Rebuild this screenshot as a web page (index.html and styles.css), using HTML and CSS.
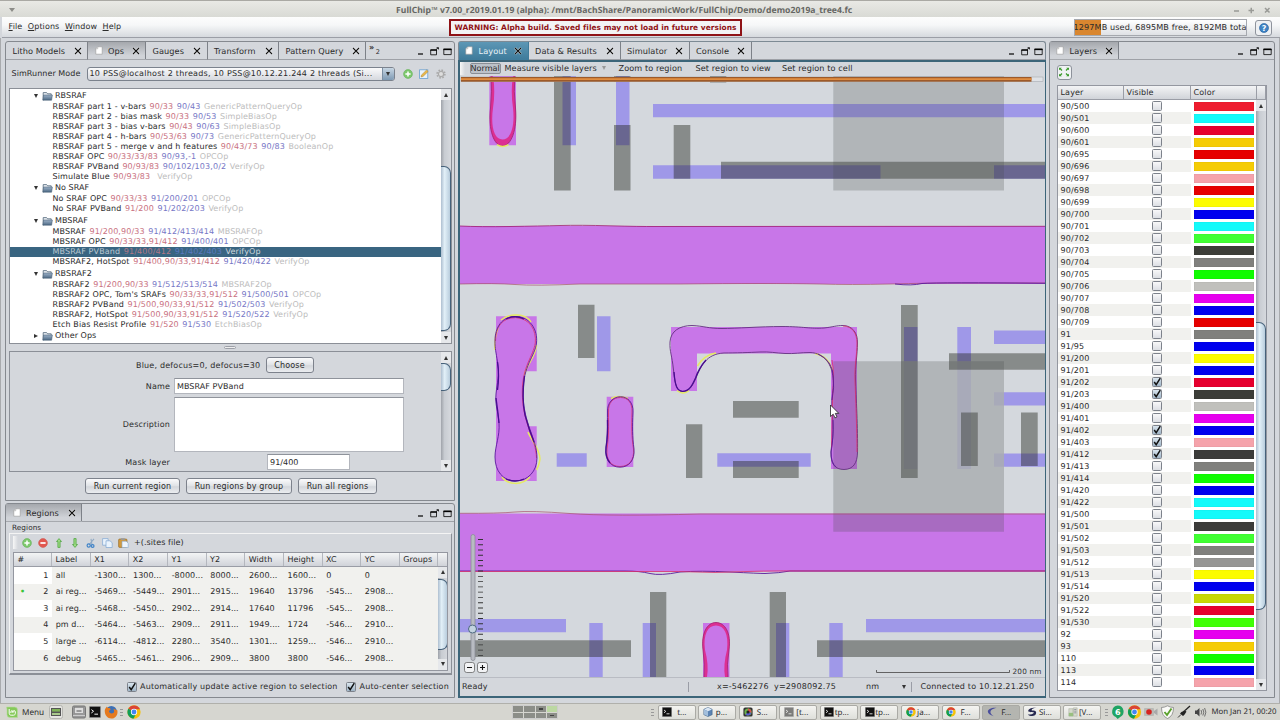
FILE: index.html
```
<!DOCTYPE html>
<html lang="en">
<head>
    <meta charset="UTF-8">
    <title>FullChip</title>
    <link rel="stylesheet" href="styles.css">
</head>
<body>
    <svg class="defs" width="0" height="0">
        <linearGradient id="g-folder" x1="0" y1="0" x2="0" y2="1"><stop offset="0" stop-color="#9db2c8"/><stop offset="1" stop-color="#4c6884"/></linearGradient>
        <symbol id="i-x" viewBox="0 0 8 8"><path d="M1 1l6 6M7 1L1 7" stroke="#fff" stroke-width="2.4" opacity=".7"/><path d="M1 1l6 6M7 1L1 7" stroke="#111" stroke-width="1.1"/></symbol>
        <symbol id="i-doc" viewBox="0 0 8 9"><path d="M2.8.8h4.4v7.4H.8V2.8z" fill="#fff" stroke="#999" stroke-width=".6"/><path d="M.8 2.8h2v-2" fill="#ddd" stroke="#999" stroke-width=".4"/></symbol>
        <symbol id="i-min" viewBox="0 0 9 9"><path d="M2 7h5" stroke="#000" stroke-width="1.2"/></symbol>
        <symbol id="i-float" viewBox="0 0 9 9"><path d="M.7 3h5.8v4.8H.7z" fill="none" stroke="#000" stroke-width=".8"/><path d="M.4 3h6.4" stroke="#000" stroke-width="1.3"/><path d="M6 2.6L8.2.8M6.6.7h1.9v1.7" fill="none" stroke="#000" stroke-width=".8"/></symbol>
        <symbol id="i-max" viewBox="0 0 9 9"><path d="M.8 2.2h7.4v5.4H.8z" fill="none" stroke="#000" stroke-width=".8"/><path d="M.4 2.4h8.2" stroke="#000" stroke-width="1.5"/></symbol>
        <symbol id="i-folder" viewBox="0 0 11 10"><path d="M1.2 9V1.6h3.4l1 1.2h3.6V5z" fill="#e8edf2" stroke="#4f6478" stroke-width=".8"/><path d="M.8 9.2L1.6 4h8.8L9.6 9.2z" fill="url(#g-folder)" stroke="#3f566d" stroke-width=".5"/></symbol>
        <symbol id="i-plus" viewBox="0 0 10 10"><circle cx="5" cy="5" r="4.4" fill="#7cc86b" stroke="#6fb562" stroke-width=".7"/><path d="M5 2.4v5.2M2.4 5h5.2" stroke="#fff" stroke-width="1.5"/></symbol>
        <symbol id="i-minus" viewBox="0 0 10 10"><circle cx="5" cy="5" r="4.4" fill="#e2574f" stroke="#d0605a" stroke-width=".7"/><path d="M2.4 5h5.2" stroke="#fff" stroke-width="1.7"/></symbol>
        <symbol id="i-edit" viewBox="0 0 10 10"><rect x=".6" y=".8" width="8.2" height="8.6" fill="#e8f2fb" stroke="#6a9fd0" stroke-width=".8"/><path d="M2 7.9l.5-2L7.6 1l1.6 1.5-5.2 5z" fill="#eab84a" stroke="#9b7428" stroke-width=".4"/></symbol>
        <symbol id="i-gear" viewBox="0 0 10 10"><circle cx="5" cy="5" r="3.9" fill="none" stroke="#aaa" stroke-width="1.6" stroke-dasharray="1.6 1.46"/><circle cx="5" cy="5" r="2.6" fill="#ddd" stroke="#aaa" stroke-width="1.2"/></symbol>
        <symbol id="i-arrow" viewBox="0 0 10 10"><path d="M5 .6l2.5 2.9H6.1v5.9H3.9V3.5H2.5z" fill="#9fdb86" stroke="#43a035" stroke-width=".7"/></symbol>
        <symbol id="i-cut" viewBox="0 0 10 10"><path d="M3.3 6.5L8 .8M6 6.8L5 .8" stroke="#8fa9c4" stroke-width="1.1"/><circle cx="2.7" cy="7.5" r="1.6" fill="none" stroke="#3f83c8" stroke-width="1.2"/><circle cx="6.6" cy="8" r="1.4" fill="none" stroke="#3f83c8" stroke-width="1.2"/></symbol>
        <symbol id="i-copy" viewBox="0 0 11 10"><path d="M.6.6h5.5v6.6H.6z" fill="#eaf3fc" stroke="#7fa6d2" stroke-width=".7"/><path d="M4 2.8h4l2.2 2v4.7H4z" fill="#eaf3fc" stroke="#7fa6d2" stroke-width=".7"/></symbol>
        <symbol id="i-paste" viewBox="0 0 11 10"><rect x=".6" y="1" width="8.4" height="8.4" rx="1" fill="#d29a3e" stroke="#8f6420" stroke-width=".6"/><rect x="2.8" y=".3" width="4" height="1.7" fill="#999"/><path d="M4 3.2h4.2l2 2v4.4H4z" fill="#eef5fc" stroke="#7fa6d2" stroke-width=".6"/></symbol>
        <symbol id="i-check" viewBox="0 0 10 10"><path d="M2.2 5l2 2.6L8.3 1.2" fill="none" stroke="#111" stroke-width="1.5"/></symbol>
        <symbol id="i-term" viewBox="0 0 10 10"><rect width="10" height="10" rx=".6" fill="#999"/><rect x=".7" y=".7" width="8.6" height="8.6" fill="#111"/><path d="M2 3l1.8 1.4L2 5.8M4.5 6.8h3" stroke="#fff" fill="none" stroke-width=".8"/></symbol>
        <symbol id="i-chrome" viewBox="0 0 12 12"><circle cx="6" cy="6" r="5.7" fill="#f4c20d"/><path d="M6 6L1.1 3.2A5.7 5.7 0 0 1 11.2 3.6L6 3.6z" fill="#db4437"/><path d="M6 6L1.1 3.2A5.7 5.7 0 0 0 5.5 11.7L8 7.2z" fill="#0f9d58"/><circle cx="6" cy="6" r="2.7" fill="#fff"/><circle cx="6" cy="6" r="2.1" fill="#4285f4"/></symbol>
    </svg>

    <div class="titlebar">
        <span class="title-menu"></span>
        <span class="title-text">FullChip™ v7.00_r2019.01.19 (alpha): /mnt/BachShare/PanoramicWork/FullChip/Demo/demo2019a_tree4.fc</span>
        <svg class="title-buttons" width="40" height="8" viewBox="0 0 40 8"><path d="M1 5h5M15.5 4.5H21M18.25 1.8v5.4M32 2l4.5 4.5M36.5 2L32 6.5" stroke="#999a96" stroke-width="1.5"/></svg>
    </div>

    <div class="menubar">
        <div class="menus"><span><u>F</u>ile</span><span><u>O</u>ptions</span><span><u>W</u>indow</span><span><u>H</u>elp</span></div>
        <div class="warning">WARNING: Alpha build. Saved files may not load in future versions</div>
        <div class="memory">1297MB used, 6895MB free, 8192MB tota</div>
        <div class="help"><svg width="10" height="10" viewBox="0 0 10 10"><circle cx="5" cy="5" r="4.5" fill="#3f83c4" stroke="#1f5c9c" stroke-width=".6"/><text x="5" y="7.8" class="help-mark">?</text></svg></div>
    </div>

    <div class="workspace">
        <div class="column left">
            <section class="dock ops">
                <div class="tabs">
                    <div class="tab w-litho">Litho Models<svg class="x"><use href="#i-x"/></svg></div>
                    <div class="tab active w-ops"><svg class="doc"><use href="#i-doc"/></svg>Ops<svg class="x"><use href="#i-x"/></svg></div>
                    <div class="tab w-gauges">Gauges<svg class="x"><use href="#i-x"/></svg></div>
                    <div class="tab w-transform">Transform<svg class="x"><use href="#i-x"/></svg></div>
                    <div class="tab w-pattern">Pattern Query<svg class="x"><use href="#i-x"/></svg></div>
                    <div class="more"><b>»</b><span>2</span></div>
                    <div class="dock-buttons"><svg><use href="#i-min"/></svg><svg><use href="#i-float"/></svg><svg><use href="#i-max"/></svg></div>
                </div>
                <div class="runner">
                    <span class="runner-label">SimRunner Mode</span>
                    <div class="combo"><span>10 PSS@localhost 2 threads, 10 PSS@10.12.21.244 2 threads (Si...</span><i><b class="down"></b></i></div>
                    <svg class="icon"><use href="#i-plus"/></svg><svg class="icon"><use href="#i-edit"/></svg><svg class="icon"><use href="#i-gear"/></svg>
                </div>
                <div class="tree-box">
                    <div class="tree" id="tree"></div>
                    <div class="scroll"><i class="btn"><b class="up"></b></i><div class="track"><div class="thumb tree-thumb"></div></div><i class="btn"><b class="down"></b></i></div>
                </div>
                <div class="splitter"><i></i></div>
                <div class="form-box">
                    <div class="form">
                        <div class="choose"><span>Blue, defocus=0, defocus=30</span><button>Choose</button></div>
                        <div class="field"><label>Name</label><div class="input">MBSRAF PVBand</div></div>
                        <div class="field tall"><label>Description</label><div class="input"></div></div>
                        <div class="field mask"><label>Mask layer</label><div class="input">91/400</div></div>
                    </div>
                    <div class="scroll"><i class="btn"><b class="up"></b></i><div class="track"><div class="thumb form-thumb"></div></div><i class="btn"><b class="down"></b></i></div>
                </div>
                <div class="run-buttons"><button class="run1">Run current region</button><button class="run2">Run regions by group</button><button class="run3">Run all regions</button></div>
            </section>

            <section class="dock regions">
                <div class="tabs">
                    <div class="tab active w-regions"><svg class="doc"><use href="#i-doc"/></svg>Regions<svg class="x"><use href="#i-x"/></svg></div>
                    <div class="dock-buttons"><svg><use href="#i-min"/></svg><svg><use href="#i-float"/></svg><svg><use href="#i-max"/></svg></div>
                </div>
                <div class="regions-label">Regions</div>
                <div class="regions-box">
                    <div class="regions-tools">
                        <i class="handle"></i>
                        <svg><use href="#i-plus"/></svg><svg><use href="#i-minus"/></svg><svg><use href="#i-arrow"/></svg><svg class="flip"><use href="#i-arrow"/></svg><svg><use href="#i-cut"/></svg><svg class="wide"><use href="#i-copy"/></svg><svg class="wide"><use href="#i-paste"/></svg>
                        <span>+(.sites file)</span>
                    </div>
                    <div class="grid">
                        <div class="grid-head" id="regions-head"></div>
                        <div class="grid-main">
                            <div class="grid-rows" id="regions-rows"></div>
                            <div class="scroll"><i class="btn"><b class="up"></b></i><div class="track"><div class="thumb regions-thumb"></div></div><i class="btn"><b class="down"></b></i></div>
                        </div>
                    </div>
                </div>
                <div class="checks"><i class="box on"><svg><use href="#i-check"/></svg></i><span class="c1">Automatically update active region to selection</span><i class="box on"><svg><use href="#i-check"/></svg></i><span class="c2">Auto-center selection</span></div>
            </section>
        </div>

        <section class="dock layout">
            <div class="tabs">
                <div class="tab focus w-layout"><svg class="doc"><use href="#i-doc"/></svg>Layout<svg class="x"><use href="#i-x"/></svg></div>
                <div class="tab w-data">Data &amp; Results<svg class="x"><use href="#i-x"/></svg></div>
                <div class="tab w-sim">Simulator<svg class="x"><use href="#i-x"/></svg></div>
                <div class="tab w-console">Console<svg class="x"><use href="#i-x"/></svg></div>
                <div class="dock-buttons"><svg><use href="#i-min"/></svg><svg><use href="#i-float"/></svg><svg><use href="#i-max"/></svg></div>
            </div>
            <div class="layout-body">
                <div class="layout-tools">
                    <i class="handle"></i><span class="t0">Normal</span><span class="t1">Measure visible layers</span><b class="down dim"></b>
                    <span class="t2">Zoom to region</span><span class="t3">Set region to view</span><span class="t4">Set region to cell</span>
                </div>
                <svg class="canvas" width="585" height="601" viewBox="460 76 585 601">
                    <g class="pink">
                        <path d="M489.3 76h26.7v69.3h-26.7z"/>
                        <path d="M460 226h585v58H460zM460 513.5h585v58H460z"/>
                        <path d="M496 316.3h40.7v55H523v55h13.7V481H496z"/>
                        <path d="M606.7 396.7h26.6V467h-26.6z"/>
                        <path d="M671 327h186v142h-26V353.5H697V391h-26z"/>
                        <path d="M703 623h26.5v54H703z"/>
                        <path d="M515.5 316.5C530 316.5 538 330 536.5 343C535 356 523 366 523 392C523 424 537 438 537 458C537 471 528 481 515.5 481S495 471 495 457C495 446 500 436 499 423C498 410 495 406 496 394C497 382 500 376 497.5 362C496 352 495 349 495 341C495 327 502 316.5 515.5 316.5z"/>
                    </g>
                    <g class="blue">
                        <path d="M562.5 76H576v69.3h-13.5zM616 76h13.5v69.3H616zM653 104h392v13.3H653zM653 165.3h227.5v13.4H653zM994 165.3h51v13.4h-51z"/>
                        <path d="M597 316.3h13.5v55H597zM556.7 453.3h30v13.4h-30zM717.3 453.3h93.4v13.4h-93.4z"/>
                        <path d="M904 327h13.5v34.3H904zM957.3 327H971v34.3h-13.7zM994 330.5h51V344h-51zM1004 392.2h41v13.3h-41zM1004 453.5h41v13.3h-41z"/>
                        <path d="M460 619h106v13.2H460zM589.3 623h13.4v54h-13.4zM642.7 623H656v54h-13.3zM776 623h13.3v54H776zM829.3 623h13.4v54h-13.4zM866 619h179v13.2H866z"/>
                    </g>
                    <path class="blue faint" d="M904 361.3h13.5V469H904zM957.3 361.3H971V469h-13.7zM994 392.2h10v13.3h-10zM994 453.5h10v13.3h-10z"/>
                    <g class="gray">
                        <path d="M554 76h16.7v114.5H554zM614 76h16.5v6H614zM614 125h16.5v65.5H614zM673.7 125h16.6v53.7h-16.6zM710 76h16.3v6.5H710zM721 161.7h324v17H721z"/>
                        <path d="M578 304.7h16.5V358H578zM733 401h65.7v16.7H733zM686 424.3h16.3V478H686zM733 461h65.7v17H733z"/>
                        <path d="M901 305h16.7v173H901zM949 353.3h96v16.5h-96zM961 412.5h16.8V466H961zM1021 412.5h16.7V466H1021z"/>
                        <path d="M650 592h16.3v85H650zM769.7 592H786v85h-16.3zM460 640.3h171V657H460zM817 640.3h228V657H817z"/>
                    </g>
                    <path class="wash" d="M833.3 76H1004v114.5H833.3zM833.3 361.3H1004v170.5H833.3z"/>

                    <!-- process band: hot fill between outer and inner contour -->
                    <path class="band" fill-rule="evenodd" d="M491 76Q492 91 490.5 108C488 130 494 146 502.5 146S517.5 130 515.5 108Q513.5 91 514.8 76H513Q510.5 91 513 108C515 126 511 139.5 502.5 139.5S490.5 126 493 108Q495.5 91 493 76z"/>
                    <path d="M491 76Q492 91 490.5 108C488 130 494 146 502.5 146S517.5 130 515.5 108Q513.5 91 514.8 76" class="c-rim"/>
                    <path d="M497 144.7Q502.5 148.5 508.5 144.7" class="c-yellow"/>
                    <path class="band" fill-rule="evenodd" d="M704 677Q705 665 703 650C701 633 707 622.5 716 622.5S731.5 633 729 650Q726.5 665 728 677H725Q723 665 727 650C729 634 724 625.5 716 625.5S703 634 705 650Q709 665 707 677z"/>
                    <path d="M704 677Q705 665 703 650C701 633 707 622.5 716 622.5S731.5 633 729 650Q726.5 665 728 677" class="c-rim"/>

                    <!-- contours: yellow halo, red inner, dark blue outer -->
                    <path d="M501 320C510 313 525 313 531 322M536.5 345C536 356 526 366 524.5 375M528 432C531 440 540 449 540 459Q539 466 536.5 470M502 477C508 485 522 486 530 477M495 350Q494 338 498 328" class="c-yellow"/>
                    <path d="M516 317.7C530 318.5 536.5 330 535.3 343C533 357 522.3 366 522.3 392C522.3 424 536 438 536.5 458M495.5 341C495.5 327 502 317.7 515.5 317.7" class="c-red"/>
                    <path d="M515.5 316.5C530 316.5 538 330 536.5 343C535 356 523 366 523 392C523 424 537 438 537 458C537 471 528 481 515.5 481S495 471 495 457C495 446 500 436 499 423C498 410 495 406 496 394C497 382 500 376 497.5 362C496 352 495 349 495 341C495 327 502 316.5 515.5 316.5z" class="c-blue"/>
                    <path d="M497.5 362Q499.5 376 497.5 390M499 423Q498 412 496 398M524.5 376Q521.5 400 525 415Q529 430 534 442M506 319Q515 314.5 524 319M506 479Q515 483 524 479" class="c-navy"/>

                    <path d="M611 398.5Q619 394.5 628 398.5" class="c-yellow"/>
                    <path d="M620.5 397.5C628 397.5 632.5 403 632 412C631.5 427 631.5 436 633.5 449C634.5 460 629 466.5 620 466.5S606 460 607 449C609 435 608.5 427 608.5 412C608 403 613 397.5 620.5 397.5z" class="c-red"/>
                    <path d="M620.5 396.7C628 396.7 633.5 403 633 412C632.3 427 632.3 436 634 449C635 460 629 467.2 620 467.2S604.7 460 606 449C608 435 607.5 427 607.5 412C607 403 613 396.7 620.5 396.7z" class="c-blue"/>
                    <path d="M607.5 420Q608 435 606 447Q605 457 610 463" class="c-navy"/>

                    <path d="M697.5 366Q704 355 716 353M815 353.5Q828 356 832.5 370M677 390.5Q683 395.5 689 390.5" class="c-yellow"/>
                    <path d="M682.5 391.5C677 391.5 675 385 673.5 370C672 355 669.5 352 670 342C670.5 331 680 325.5 692 325.5C704 326 708 328.5 722 328.5S760 326.5 782 326.5S810 329 824 328C833 327 836 325.5 843 325.5C852 325.5 858 333 857.5 343C857.5 355 855 365 855.5 380S858 430 857.5 452C857.5 463 853 469.5 844 469.5S830.5 464 831 452C831.5 443 833.5 439 833 425S831.5 410 832 400S834 386 833 378C832 365 825 353 810 352.5C800 352.5 795 354 785 353.5S770 351.5 760 352S735 353 724 353C706 354 701 366 696 378C692 387 689 391.5 682.5 391.5z" class="c-line"/>
                    <path d="M843 326C852 326 857 333 857 343C857 355 854.5 365 855 380S857 430 857 452M832 360Q834.5 372 832.7 395L831.5 450" class="c-red"/>
                    <path d="M674 372C675 386 677 391 682.5 391.3C689 391.3 692 386 695.5 378Q699 368 706 360" class="c-navy"/>
                    <path d="M818 354Q833 361 833.3 377Q834.5 387 832 400M833 420Q833.5 440 831 452Q831 463 836 467" class="c-blue"/>

                    <path d="M460 226Q480 227 510 226.5T560 225.5T610 225.8T655 226.5L1045 226.3" class="c-rim"/>
                    <path d="M460 284Q495 283 515 284.5T580 284H680Q770 283 820 284Q850 285 890 284T945 283H1045" class="c-brown"/>
                    <path d="M895 284Q912 286 922 283.5Q940 282.3 1045 283.3" class="c-blue"/>
                    <path d="M460 513.3Q500 513.5 515 512T570 513.5T700 514L1045 514" class="c-brown"/>
                    <path d="M460 571H625Q640 571 650 573.5T680 572Q700 570.5 730 572T765 573.5Q780 573 790 571L1045 571" class="c-blue"/>
                    <path d="M460 571.5H640Q680 571 715 572.5Q770 570.5 800 571H1045" class="c-red"/>

                    <g id="zoom-slider">
                        <rect x="471" y="534.5" width="4" height="126" rx="2" fill="#b8bbc2" stroke="#8b8e98" stroke-width=".8"/>
                        <path d="M480.5 539v117.5" stroke="#333" stroke-width="5" stroke-dasharray=".9 4.37"/>
                        <circle cx="472.5" cy="629" r="4" fill="#c3d3e0" stroke="#4e6a80" stroke-width="1"/>
                        <g fill="#f2f3f5" stroke="#666" stroke-width=".8"><rect x="464.5" y="662.5" width="10" height="10" rx="2.2"/><rect x="477.5" y="662.5" width="10" height="10" rx="2.2"/></g>
                        <path d="M467 667.5h5M480 667.5h5M482.5 665v5" stroke="#111" stroke-width="1.1"/>
                    </g>
                    <path d="M876.5 670v2.5h133V670" fill="none" stroke="#555" stroke-width=".9"/>
                    <text x="1012.5" y="674.3" class="scale-text">200 nm</text>

                    <rect x="461" y="77" width="582" height="4.7" fill="#dfe2e6" stroke="#9a9ea5" stroke-width=".5"/>
                    <rect x="461" y="77" width="570.5" height="4.7" fill="#9d5a2a"/>
                    <rect x="461" y="78.2" width="570.5" height="1.8" fill="#e08d40"/>
                    <path d="M830.5 405v11.5l2.7-2.3 1.8 3.7 2-1-1.7-3.5h3.5z" fill="#fff" stroke="#222" stroke-width=".8"/>
                </svg>
                <div class="status"><span class="s1">Ready</span><span class="s2">x=-5462276&nbsp; y=2908092.75</span><span class="s3">nm</span><b class="down"></b><span class="s4">Connected to 10.12.21.250</span></div>
            </div>
        </section>

        <section class="dock layers">
            <div class="tabs">
                <div class="tab active w-layers"><svg class="doc"><use href="#i-doc"/></svg>Layers<svg class="x"><use href="#i-x"/></svg></div>
                <div class="dock-buttons"><svg><use href="#i-min"/></svg><svg><use href="#i-float"/></svg><svg><use href="#i-max"/></svg></div>
            </div>
            <div class="fit"><svg width="12" height="10" viewBox="0 0 12 10"><path d="M4 3.5L2 1.5M8 3.5l2-2M4 6.5l-2 2M8 6.5l2 2" stroke="#3a9a2a" stroke-width="1.2"/><path d="M1 3.300V.700h2.800zM11 3.300V.700H8.200zM1 6.700v2.600h2.800zM11 6.700v2.600H8.200z" fill="#3a9a2a"/></svg></div>
            <div class="layer-table">
                <div class="layer-head"><span>Layer</span><span>Visible</span><span>Color</span><span></span></div>
                <div class="layer-main">
                    <div class="layer-rows" id="layers"></div>
                    <div class="scroll"><i class="btn"><b class="up"></b></i><div class="track"><div class="thumb layers-thumb"></div></div><i class="btn"><b class="down"></b></i></div>
                </div>
            </div>
        </section>
    </div>

    <div class="taskbar">
        <svg class="mint" width="12" height="12" viewBox="0 0 12 12"><path d="M.5 1h8a3 3 0 0 1 3 3v7.5H4a3 3 0 0 1-3-3V3.5z" fill="#86c95a" stroke="#b7dba0" stroke-width=".6"/><path d="M3.2 3v4.2c0 1.3.8 2 2 2h2.2c1.2 0 1.9-.7 1.9-1.8V6c0-1.9-2.4-1.9-2.4 0v1M6.9 6c0-1.9-2-1.9-2 0v1" fill="none" stroke="#fff" stroke-width="1"/></svg>
        <span class="menu">Menu</span>
        <svg class="launch l1" width="14" height="14" viewBox="0 0 14 14"><rect x=".5" y=".5" width="13" height="13" rx="2" fill="#e4e4e0" stroke="#b5b5b0"/><rect x="2" y="3" width="10" height="8" fill="#555"/><rect x="3" y="4" width="8" height="2.6" fill="#7fb257"/><path d="M3 8h8v2H3z" fill="#a9c98c"/></svg>
        <svg class="launch l2" width="14" height="14" viewBox="0 0 14 14"><rect x=".5" y="1" width="13" height="12" rx="1.5" fill="#999" stroke="#777"/><rect x="2.5" y="2.5" width="9" height="6" fill="#ddd" stroke="#777" stroke-width=".5"/><path d="M4.5 6h5" stroke="#555"/><path d="M1 10.5h12" stroke="#ccc"/></svg>
        <svg class="launch l3" width="12" height="12"><use href="#i-term"/></svg>
        <svg class="launch l4" width="14" height="14" viewBox="0 0 14 14"><circle cx="7.3" cy="6.5" r="5.5" fill="#3c6fb5"/><path d="M.8 5c.6-2 1.7-3 2.2-3.6.2 1 .6 1.4 1.3 1.7 1.3 0 2 .5 2.5 1.2L5 6c0 2 2 2.8 3.6 2.3 2-.8 1.7-2.8.8-4.5C12 4.5 13 6 13.3 5c1 5-2 8.5-6 8.5S.3 10 .8 5z" fill="#e57a1e"/></svg>
        <i class="grip"></i>
        <svg class="launch l5" width="14" height="14"><use href="#i-chrome"/></svg>
        <div class="pager"><i></i><i></i><i class="win"></i><i class="cur"></i><i></i><i></i><i></i><i class="win"></i></div>
        <i class="grip g2"></i>
        <div class="tasks">
            <div class="task"><svg><use href="#i-term"/></svg>t...</div>
            <div class="task"><svg viewBox="0 0 12 12"><path d="M6 .5l5 2.3v6.4l-5 2.3-5-2.3V2.8z" fill="#5b83b3" stroke="#36597f" stroke-width=".6"/><path d="M6 .7l4.7 2.2L6 5 1.3 2.9z" fill="#dbe7f4"/><path d="M1.2 3.1L6 5.2v6l-4.8-2.2z" fill="#a3bfdc"/></svg>p...</div>
            <div class="task"><svg viewBox="0 0 12 12"><rect x=".5" y=".5" width="11" height="11" rx="2" fill="#333"/><circle cx="6" cy="6" r="4.3" fill="#6ab04c"/><path d="M6 6V1.7A4.3 4.3 0 0 1 10 7z" fill="#d9534f"/><path d="M6 6l4 1.2A4.3 4.3 0 0 1 3 9z" fill="#5a5ad0"/><circle cx="6" cy="6" r="1.9" fill="#222"/></svg>S...</div>
            <div class="task"><svg class="dim"><use href="#i-term"/></svg>[t...</div>
            <div class="task"><svg><use href="#i-term"/></svg>tp...</div>
            <div class="task"><svg><use href="#i-term"/></svg>tp...</div>
            <div class="task"><svg><use href="#i-chrome"/></svg>ja...</div>
            <div class="task"><svg><use href="#i-chrome"/></svg>F...</div>
            <div class="task pressed"><svg viewBox="0 0 12 12"><path d="M11.5 1C5 .5 1 3 1 5.5s3 4.5 7 5.5C5 9 3.8 7.5 4.2 5.5S7.5 2 11.5 1z" fill="#4b4f9c"/></svg>F...</div>
            <div class="task"><svg viewBox="0 0 12 12"><path d="M11.5 1C5 .5 1.5 2.5 1.5 4.5S5 6 8.5 6.5c-1 2-4 2.5-7.5 2.5 3 3 10 2.5 10-2S5 5 5.5 3.5 8 1.5 11.5 1z" fill="#26284f"/></svg>Si...</div>
            <div class="task"><svg viewBox="0 0 12 12"><path d="M1 2h5v9H1zM6.5 1h4.5v10H6.5z" fill="#d5dacd" stroke="#a5aa9d" stroke-width=".6"/><path d="M1 7h5v4H1z" fill="#98bf80"/><path d="M7.5 3h2.5M7.5 5h2.5M7.5 7h2.5" stroke="#889"/></svg>[V...</div>
        </div>
        <i class="grip g3"></i>
        <svg class="tray" width="96" height="14" viewBox="0 0 96 14">
            <path d="M6.7.5a6 6 0 0 1 2.5 11.4L6.7 14l-1.9-2A6 6 0 0 1 6.7.5z" fill="#1fa463"/><text x="6.7" y="9.8" class="badge">6</text>
            <use href="#i-chrome" x="16.5" y="0" width="14" height="14"/>
            <rect x="33" y="3" width="10" height="8" rx="1" fill="#b9b9b5"/><path d="M43 6l3.5-2.5v7L43 8z" fill="#aaa"/><circle cx="38" cy="7" r="2.8" fill="#d6231f"/>
            <path d="M56.5.8q3 1.7 6 1.7 0 8.5-6 11-6-2.5-6-11 3 0 6-1.7z" fill="#fafaf7" stroke="#777" stroke-width=".7"/><path d="M53.5 7l2.5 3 4.5-6.5" fill="none" stroke="#5aa02c" stroke-width="1.9"/>
            <path d="M67 12.5l3-3" stroke="#333" stroke-width="1"/><path d="M69 8.5c2-2.5 3.5-2 4.5-3.5l2 1.8c-1.5 1-1 2.8-3.5 4.2z" fill="#222"/><path d="M74 5.5L79 1" stroke="#222" stroke-width="1.3"/>
            <path d="M84 5.5h1.8L88.5 3v8.5L85.8 9H84z" fill="#444"/><path d="M90 5q1.3 2.2 0 4.5M91.8 4q2 3.2 0 6.5M93.6 3q2.5 4.2 0 8.5" stroke="#555" fill="none" stroke-width=".8"/>
        </svg>
        <span class="clock">Mon Jan 21, 00:20</span>
    </div>
    <script src="script.js"></script>
</body>
</html>
```
FILE: styles.css
```
* {
    box-sizing: border-box;
}
body {
    margin: 0;
    width: 1280px;
    height: 720px;
    overflow: hidden;
    display: flex;
    flex-direction: column;
    background: #d4d7dc;
    color: #2b2b2b;
    font-family: "DejaVu Sans", sans-serif;
    font-size: 8px;
    letter-spacing: 0.06px;
    line-height: 10px;
    text-rendering: geometricPrecision;
    white-space: nowrap;
}
.defs {
    position: absolute;
}
svg {
    display: block;
    flex: none;
}
button {
    font: inherit;
    letter-spacing: inherit;
    color: inherit;
    padding: 1px 0 0;
    height: 16px;
    border: 1px solid #7d828c;
    border-radius: 3px;
    background: linear-gradient(#fbfbfc, #dfe2e6 50%, #d3d6db 55%, #ebedf0);
}

/* title bar and menus */
.titlebar {
    height: 17px;
    flex: none;
    display: flex;
    align-items: center;
    border-top: 1px solid #aaa9a4;
    background: linear-gradient(#e9e9e5, #d9dad5);
    padding-top: 1px;
}
.title-menu {
    margin-left: 9px;
    border: 3px solid transparent;
    border-top: 4px solid #8c8c88;
    border-bottom: 0;
}
.title-text {
    flex: 1;
    padding-left: 381px;
    font: bold 8.59px "Noto Sans", sans-serif;
    letter-spacing: 0.06px;
    color: #666763;
}
.title-buttons {
    margin-right: 7px;
}
.menubar {
    height: 21px;
    flex: none;
    display: flex;
    margin-left: 2px;
    border-bottom: 1px solid #9b9ea6;
    background: linear-gradient(#fdfdfd, #f6f7f8 40%, #d6d9de);
}
.menus {
    display: flex;
    gap: 5.5px;
    width: 447px;
    padding: 5px 0 0 6.5px;
    letter-spacing: 0.1px;
}
.warning {
    width: 293px;
    height: 17px;
    margin-top: 2px;
    border: 2px solid #8f1216;
    color: #8f1216;
    background: #f3f3f4;
    font-weight: bold;
    font-size: 7.45px;
    letter-spacing: 0.04px;
    line-height: 13px;
    text-align: center;
}
.memory {
    width: 173px;
    height: 17px;
    margin: 2px 0 0 331.5px;
    border: 1px solid #a5a8ae;
    background: linear-gradient(90deg, #d9862f 26px, transparent 26px), linear-gradient(#fff, #dfe1e5);
    line-height: 15px;
    overflow: hidden;
    font-size: 8.15px;
    letter-spacing: 0.09px;
    text-indent: -1px;
}
.help {
    width: 17px;
    height: 16px;
    margin: 2.5px 0 0 8.5px;
    border: 1px solid #8e939c;
    border-radius: 3px;
    background: #eef0f3;
    padding: 2px 2.5px;
}
.help-mark {
    fill: #fff;
    font-weight: bold;
    text-anchor: middle;
}

/* docks */
.workspace {
    display: flex;
    flex: none;
    height: 665px;
    padding: 3px 4px 5px 4px;
    border-left: 1px solid #a8aaad;
    border-right: 1px solid #a8aaad;
    gap: 3px;
}
.column {
    width: 449.5px;
    display: flex;
    flex-direction: column;
    gap: 2px;
    flex: none;
}
.dock {
    border: 1px solid #85898f;
    border-radius: 3px 3px 0 0;
    display: flex;
    flex-direction: column;
}
.ops {
    height: 460px;
}
.regions {
    flex: 1;
}
.tabs {
    display: flex;
    flex: none;
    height: 17.5px;
    font-size: 8.2px;
    letter-spacing: 0.08px;
}
.tab {
    display: flex;
    align-items: center;
    padding: 1px 5.5px 0 6.5px;
    border-right: 1px solid #7d8188;
    border-bottom: 1px solid #9ea1a7;
}
.tab .x {
    width: 8px;
    height: 8px;
    margin-left: auto;
}
.tab .doc {
    width: 8px;
    height: 9px;
    margin-right: 5.5px;
}
.tab.active {
    background: linear-gradient(#a5a8ad, #d0d3d8 80%);
    border-bottom-color: transparent;
}
.tab.focus {
    background: linear-gradient(#5d97b5, #3f7c9c);
    color: #e9f3f8;
    border-color: #3f7c9c;
}
.w-litho { width: 82px; }
.w-ops { width: 58px; }
.w-gauges { width: 61.5px; }
.w-transform { width: 71.5px; }
.w-pattern { width: 87px; }
.w-regions { width: 76px; }
.w-layout { width: 70px; }
.w-data { width: 92px; }
.w-sim { width: 69px; }
.w-console { width: 62px; }
.w-layers { width: 69.5px; }
.more {
    display: flex;
    gap: 1.5px;
    padding-left: 3px;
    font-size: 8px;
    line-height: 11px;
    border-bottom: 1px solid #9ea1a7;
}
.more span {
    font-size: 6.5px;
    padding-top: 5px;
}
.dock-buttons {
    flex: 1;
    display: flex;
    justify-content: flex-end;
    gap: 4.5px;
    padding: 5px 1.5px 0 0;
    border-bottom: 1px solid #9ea1a7;
}
.dock-buttons svg {
    width: 9px;
    height: 9px;
}

/* scrollbars and arrows */
.up, .down {
    display: block;
    width: 0;
    height: 0;
    border: 2.3px solid transparent;
}
.up {
    border-bottom: 4px solid #333;
    border-top: 0;
}
.down {
    border-top: 4px solid #333;
    border-bottom: 0;
}
.down.dim {
    border-top-color: #999;
}
.scroll {
    width: 10px;
    flex: none;
    display: flex;
    flex-direction: column;
}
.scroll .btn {
    height: 11px;
    display: flex;
    align-items: center;
    justify-content: center;
    background: #e6e8eb;
}
.track {
    flex: 1;
    background: linear-gradient(90deg, #9fa3aa, #c8ccd2 35%, #d6d9de);
}
.thumb {
    border: 1px solid #46617a;
    border-left: 0;
    border-radius: 0 7px 7px 0;
    background: linear-gradient(90deg, #aebfd0, #e2f0f8 40%, #b9cddd);
}
.tree-thumb { margin-top: 66px; height: 165px; }
.form-thumb { margin-top: 0; height: 28px; }
.regions-thumb { margin-top: 1px; height: 71px; }
.layers-thumb { margin-top: 211px; height: 288px; }

/* ops */
.runner {
    display: flex;
    align-items: center;
    height: 27.5px;
    padding: 1px 0 0 5.5px;
}
.runner-label {
    width: 75px;
}
.combo {
    width: 308px;
    height: 14px;
    display: flex;
    justify-content: space-between;
    border: 1px solid #7b828d;
    border-radius: 3px;
    background: linear-gradient(#fafafb, #d5d8de);
    line-height: 12px;
    padding-left: 2px;
    margin-right: 8.5px;
    letter-spacing: 0.24px;
}
.combo i {
    width: 12px;
    padding: 4px 0 0 3.5px;
    background: linear-gradient(#c7d6e3, #7e9ab4);
    border-left: 1px solid #7b8fa3;
    border-radius: 0 2px 2px 0;
}
.icon {
    width: 10px;
    height: 10px;
    margin-right: 6.3px;
}
.tree-box, .form-box {
    margin: 0 2px 0 3px;
    border: 1px solid #8b8f97;
    display: flex;
}
.tree-box {
    height: 256px;
    margin-top: 1px;
    background: #fff;
}
.tree {
    flex: 1;
}
.folder {
    height: 12.67px;
    display: flex;
    align-items: center;
    padding: 1px 0 0 24px;
}
.folder svg {
    width: 11px;
    height: 10px;
    margin: 0 2.5px 0 3.5px;
}
.folder .closed {
    transform: rotate(-90deg);
}
.op {
    height: 10px;
    padding-left: 42.5px;
    display: flex;
    gap: 3.5px;
    letter-spacing: 0.13px;
}
.in { color: #c9717f; }
.out { color: #7777c6; }
.kind { color: #bcbcbc; }
.op.selected {
    background: #396581;
    color: #b9c7d0;
}
.selected .in { color: #b07787; }
.selected .out { color: #5a78bf; }
.selected .kind { color: #cdd5db; }
.splitter {
    height: 7px;
    display: flex;
    justify-content: center;
}
.splitter i {
    width: 12px;
    height: 3px;
    margin-top: 2px;
    border: 1px solid #9da0a8;
    border-radius: 2px;
    background: #eee;
}
.form-box {
    height: 121px;
}
.form {
    flex: 1;
    overflow: hidden;
}
.choose {
    display: flex;
    align-items: center;
    padding-left: 126px;
    margin-top: 5px;
    letter-spacing: 0.19px;
}
.choose span {
    padding-top: 1px;
}
.choose button {
    width: 48px;
    margin-left: auto;
    margin-right: 127px;
}
.field {
    display: flex;
    align-items: center;
    margin-top: 5px;
}
.field label {
    width: 160px;
    padding-top: 2px;
    text-align: right;
    letter-spacing: 0.15px;
}
.input {
    width: 230px;
    height: 15.5px;
    margin-left: 4px;
    padding-left: 2px;
    border: 1px solid #b3b6bd;
    border-top-color: #8f939b;
    background: #fff;
    line-height: 15px;
}
.tall {
    margin-top: 3px;
}
.tall .input {
    height: 55px;
}
.mask {
    margin-top: 2.5px;
}
.mask .input {
    width: 83px;
    margin-left: 97px;
}
.run-buttons {
    display: flex;
    gap: 6px;
    padding: 6px 0 0 79px;
    letter-spacing: 0.16px;
}
.run1 { width: 95px; }
.run2 { width: 106px; }
.run3 { width: 79px; }

/* regions */
.regions-label {
    font-size: 7.3px;
    padding-left: 6px;
    height: 10px;
    margin-top: 1px;
}
.regions-box {
    margin: 0 2px 0 3px;
    height: 142px;
    border: 1px solid #8b8f97;
    border-top: 1px solid #f4f4f4;
    border-left-color: #f4f4f4;
    border-bottom-width: 2px;
    padding: 0 3px 0 3px;
}
.regions-tools {
    height: 18px;
    display: flex;
    align-items: center;
    gap: 6px;
}
.regions-tools svg {
    width: 10px;
    height: 10px;
}
.regions-tools svg.wide {
    width: 11px;
    margin-right: -1px;
}
.regions-tools .flip {
    transform: scaleY(-1);
}
.handle {
    width: 5px;
    height: 13px;
    margin-right: -2px;
    background: linear-gradient(90deg, #f7f7f7, #d4d7dc);
}
.grid {
    border: 1px solid #9497a0;
    height: 119px;
    background: #f1f1ee;
    overflow: hidden;
    display: flex;
    flex-direction: column;
}
.grid-head, .grid-row {
    display: grid;
    grid-template-columns: 38px 38.7px repeat(9, 38.65px);
}
.grid-head, .layer-head {
    flex: none;
    height: 14px;
    line-height: 13px;
    background: linear-gradient(#f3f4f5, #d0d3d9);
    border-bottom: 1px solid #9a9da6;
}
.grid-head span {
    padding-left: 3.5px;
    border-right: 1px solid #b4b7be;
}
.grid-main {
    display: flex;
    flex: 1;
    min-height: 0;
}
.grid-rows {
    width: 424px;
}
.grid-row {
    height: 16.67px;
    line-height: 17px;
}
.grid-row span {
    padding-left: 3.7px;
}
.grid-row .num {
    display: flex;
    justify-content: space-between;
    padding: 0 3.5px 0 6px;
}
.grid-row:nth-child(odd) .num {
    background: #fff;
}
.num b {
    color: #3bc43b;
    font-size: 8px;
}
.checks {
    display: flex;
    align-items: center;
    margin-top: 7px;
    padding-left: 120.5px;
    letter-spacing: 0.17px;
}
.box {
    display: block;
    width: 10px;
    height: 10px;
    border: 1px solid #7d828b;
    border-radius: 1.5px;
    background: linear-gradient(#f8f8f9, #dcdfe4);
}
.box svg {
    width: 10px;
    height: 10px;
    margin: -1px;
}
.box.on {
    background: linear-gradient(#d9e5ee, #9fb4c6);
}
.checks .c1 {
    width: 206px;
    margin-left: 3.5px;
}
.checks .c2 {
    margin-left: 3.5px;
}

/* layout view */
.layout {
    width: 588px;
    flex: none;
    border: 0;
}
.layout .tabs {
    border: 1px solid #7d8a94;
    border-bottom: 0;
    height: 18.5px;
    border-radius: 3px 3px 0 0;
}
.layout-body {
    flex: 1;
    border: solid #3c6579;
    border-width: 2px 1px 2px 2px;
    height: 638px;
}
.layout-tools {
    height: 14.5px;
    display: flex;
    align-items: center;
    padding-bottom: 1px;
    font-size: 8.1px;
    letter-spacing: 0.11px;
}
.layout-tools .t0 {
    border: 1px solid #8a8e95;
    border-radius: 2px;
    background: #bcc1c8;
    width: 31px;
    height: 11px;
    line-height: 9px;
    text-align: center;
    margin: 0 4px 0 7px;
    letter-spacing: 0;
}
.layout-tools .t1 { width: 97px; }
.layout-tools .t2 { width: 77px; margin-left: 13px; }
.layout-tools .t3 { width: 86.5px; }
.canvas {
    background: #d4d8dd;
}
.pink { fill: #c876e8; }
.blue { fill: #9f98e8; }
.faint { opacity: 0.2; }
.gray { fill: rgba(35, 37, 28, 0.43); }
.wash { fill: rgba(72, 76, 76, 0.25); }
.band { fill: #dc2f92; }
.c-rim, .c-yellow, .c-red, .c-blue, .c-navy, .c-line, .c-brown {
    fill: none;
    stroke-width: 0.8;
}
.c-rim { stroke: #a0206e; }
.c-yellow { stroke: #e6ea62; stroke-width: 1.5; }
.c-red { stroke: #d8306c; }
.c-blue { stroke: #5a1a9c; stroke-width: 0.9; }
.c-navy { stroke: #480c90; stroke-width: 1.3; }
.c-line { stroke: #643080; stroke-width: 0.9; }
.c-brown { stroke: #a8506a; stroke-width: 0.7; }
.scale-text {
    font-size: 7.3px;
    letter-spacing: 0.2px;
    fill: #333;
}
.status {
    display: flex;
    align-items: center;
    height: 18px;
    padding: 1px 0 0 1px;
    border-top: 1px solid #b9bcc3;
    letter-spacing: 0.17px;
}
.status .s1 { width: 228px; padding-left: 1.5px; border-right: 1px solid #9a9da6; }
.status .s2 { width: 149px; margin-left: 28.5px; }
.status .s3 { width: 36px; }
.status .s4 { margin-left: 5px; padding-left: 8.5px; border-left: 1px solid #9a9da6; }

/* layers */
.layers {
    width: 226px;
    flex: none;
}
.fit {
    width: 15px;
    height: 15px;
    margin: 5px 0 5.5px 7px;
    border: 1px solid #8d929b;
    border-radius: 3px;
    background: #f0f2f4;
    padding: 1.5px 0.5px;
}
.layer-table {
    width: 210px;
    height: 606px;
    margin-left: 7px;
    border: 1px solid #9497a0;
    display: flex;
    flex-direction: column;
    overflow: hidden;
}
.layer-head {
    display: grid;
    grid-template-columns: 66px 67px 66px 1fr;
    letter-spacing: 0.15px;
}
.layer-head span {
    padding-left: 3px;
    border-right: 1px solid #9a9da6;
}
.layer-main {
    display: flex;
    flex: 1;
    min-height: 0;
}
.layer-rows {
    flex: 1;
    overflow: hidden;
    background: #fff;
}
.layer {
    height: 12px;
    display: grid;
    grid-template-columns: 66px 67px 66px;
    line-height: 13px;
    letter-spacing: 0.14px;
}
.layer:nth-child(even) {
    background: linear-gradient(90deg, #f1f1ee 133px, #fff 133px);
}
.layer span {
    padding-left: 3px;
}
.layer .box {
    margin: 1px 0 0 28.5px;
}
.swatch {
    height: 9px;
    margin: 1.5px 3px 0 3.5px;
    box-shadow: inset 0 0 1px rgba(0, 0, 0, 0.3);
}

/* desktop panel */
.taskbar {
    flex: 1;
    display: flex;
    align-items: center;
    background: #d6d6d0;
    border-top: 1px solid #b0b0ab;
    font: 9px "Noto Sans", sans-serif;
    letter-spacing: 0;
}
.mint { margin-left: 6px; }
.menu { margin-left: 4px; width: 27px; font-size: 8.2px; }
.l2 { margin-left: 9px; }
.l3 { margin: 0 3px; }
.grip {
    width: 3px;
    height: 7px;
    margin: 0 4px 0 2px;
    background: repeating-linear-gradient(#999 0 1px, transparent 1px 3px);
}
.pager {
    display: grid;
    grid-template-columns: repeat(4, minmax(0, 1fr));
    grid-auto-rows: minmax(0, 1fr);
    gap: 1px;
    width: 46px;
    height: 14px;
    margin-left: 371px;
    border: 1px solid #ccc;
}
.pager i { background: #8c8e88; }
.pager .cur { background: #bcd8a2; }
.pager .win {
    border: solid #8c8e88;
    border-width: 2px 3px;
    background: #444;
}
.g2 { margin: 0 3.5px 0 93px; }
.tasks {
    display: flex;
    gap: 2.6px;
}
.task {
    width: 38px;
    height: 15px;
    display: flex;
    align-items: center;
    justify-content: space-between;
    padding: 0 8px 0 3.5px;
    border: 1px solid #aaaaa5;
    border-radius: 2px;
    background: linear-gradient(#f4f4f1, #dedfda);
    font-size: 8px;
}
.task svg {
    width: 10px;
    height: 10px;
}
.task svg.dim { opacity: 0.5; }
.task.pressed { background: #b4b5b0; }
.g3 { margin: 0 3px 0 4px; }
.badge {
    fill: #fff;
    font: bold 8px "DejaVu Sans", sans-serif;
    text-anchor: middle;
}
.clock {
    margin-left: 4px;
    font-size: 7.8px;
}
```
FILE: script.js
```
const tree = [
    ['RBSRAF', [
        ['RBSRAF part 1 - v-bars', '90/33', '90/43', 'GenericPatternQueryOp'],
        ['RBSRAF part 2 - bias mask', '90/33', '90/53', 'SimpleBiasOp'],
        ['RBSRAF part 3 - bias v-bars', '90/43', '90/63', 'SimpleBiasOp'],
        ['RBSRAF part 4 - h-bars', '90/53/63', '90/73', 'GenericPatternQueryOp'],
        ['RBSRAF part 5 - merge v and h features', '90/43/73', '90/83', 'BooleanOp'],
        ['RBSRAF OPC', '90/33/33/83', '90/93,-1', 'OPCOp'],
        ['RBSRAF PVBand', '90/93/83', '90/102/103,0/2', 'VerifyOp'],
        ['Simulate Blue', '90/93/83', '', 'VerifyOp']
    ]],
    ['No SRAF', [
        ['No SRAF OPC', '90/33/33', '91/200/201', 'OPCOp'],
        ['No SRAF PVBand', '91/200', '91/202/203', 'VerifyOp']
    ]],
    ['MBSRAF', [
        ['MBSRAF', '91/200,90/33', '91/412/413/414', 'MBSRAFOp'],
        ['MBSRAF OPC', '90/33/33,91/412', '91/400/401', 'OPCOp'],
        ['MBSRAF PVBand', '91/400/412', '91/402/403', 'VerifyOp'],
        ['MBSRAF2, HotSpot', '91/400,90/33,91/412', '91/420/422', 'VerifyOp']
    ]],
    ['RBSRAF2', [
        ['RBSRAF2', '91/200,90/33', '91/512/513/514', 'MBSRAF2Op'],
        ["RBSRAF2 OPC, Tom's SRAFs", '90/33/33,91/512', '91/500/501', 'OPCOp'],
        ['RBSRAF2 PVBand', '91/500,90/33,91/512', '91/502/503', 'VerifyOp'],
        ['RBSRAF2, HotSpot', '91/500,90/33,91/512', '91/520/522', 'VerifyOp'],
        ['Etch Bias Resist Profile', '91/520', '91/530', 'EtchBiasOp']
    ]],
    ['Other Ops', []]
];

let html = '';
tree.forEach(([name, ops]) => {
    html += `<div class="folder"><b class="down ${ops.length ? '' : 'closed'}"></b><svg><use href="#i-folder"/></svg>${name}</div>`;
    ops.forEach(([label, input, output, kind]) => {
        const selected = label === 'MBSRAF PVBand' ? ' selected' : '';
        html += `<div class="op${selected}"><span>${label}</span><span class="in">${input}</span><span class="out">${output}</span><span class="kind">${kind}</span></div>`;
    });
});
document.getElementById('tree').innerHTML = html;

const columns = ['#', 'Label', 'X1', 'X2', 'Y1', 'Y2', 'Width', 'Height', 'XC', 'YC', 'Groups'];
const regions = [
    ['all', '-1300...', '1300...', '-8000...', '8000...', '2600...', '1600...', '0', '0'],
    ['ai reg...', '-5469...', '-5449...', '2901...', '2915...', '19640', '13796', '-545...', '2908...'],
    ['ai reg...', '-5468...', '-5450...', '2902...', '2914...', '17640', '11796', '-545...', '2908...'],
    ['pm d...', '-5464...', '-5463...', '2909...', '2911...', '1949....', '1724', '-546...', '2910...'],
    ['large ...', '-6114...', '-4812...', '2280...', '3540...', '1301...', '1259...', '-546...', '2910...'],
    ['debug', '-5465...', '-5461...', '2906...', '2909...', '3800', '3800', '-546...', '2908...']
];
document.getElementById('regions-head').innerHTML = columns.map(c => `<span>${c}</span>`).join('');
document.getElementById('regions-rows').innerHTML = regions.map((row, i) =>
    `<div class="grid-row"><span class="num"><b>${i === 1 ? '•' : ''}</b>${i + 1}</span>${row.map(v => `<span>${v}</span>`).join('')}</div>`
).join('');

const layers = [
    ['90/500', '#ee1c2e'], ['90/501', '#14fafa'], ['90/600', '#e6002e'], ['90/601', '#f5cc05'], ['90/695', '#e60000'],
    ['90/696', '#f5cc05'], ['90/697', '#f5a3ab'], ['90/698', '#e60000'], ['90/699', '#fcfc00'], ['90/700', '#0000ee'],
    ['90/701', '#14fafa'], ['90/702', '#40ff33'], ['90/703', '#3c3d38'], ['90/704', '#80807d'], ['90/705', '#10fc00'],
    ['90/706', '#c0c0bc'], ['90/707', '#e600ee'], ['90/708', '#0000ee'], ['90/709', '#e60000'], ['91', '#80807d'],
    ['91/95', '#0000ee'], ['91/200', '#fcfc00'], ['91/201', '#0000ee'], ['91/202', '#e6002e', 1], ['91/203', '#3c3d38', 1],
    ['91/400', '#c0c0bc'], ['91/401', '#e600ee'], ['91/402', '#0000ee', 1], ['91/403', '#f5a3ab', 1], ['91/412', '#3c3c3a', 1],
    ['91/413', '#80807d'], ['91/414', '#10fc00'], ['91/420', '#0000ee'], ['91/422', '#14fafa'], ['91/500', '#14fafa'],
    ['91/501', '#3c3c3a'], ['91/502', '#40ff33'], ['91/503', '#80807d'], ['91/512', '#969694'], ['91/513', '#fcfc00'],
    ['91/514', '#0000ee'], ['91/520', '#c8d805'], ['91/522', '#e6002e'], ['91/530', '#40ff05'], ['92', '#e600ee'],
    ['93', '#f5cc05'], ['110', '#10fc00'], ['113', '#0000ee'], ['114', '#f5a3ab']
];
document.getElementById('layers').innerHTML = layers.map(([name, color, on]) =>
    `<div class="layer"><span>${name}</span><i class="box${on ? ' on' : ''}">${on ? '<svg><use href="#i-check"/></svg>' : ''}</i><i class="swatch" style="background-color: ${color}"></i></div>`
).join('');
```
